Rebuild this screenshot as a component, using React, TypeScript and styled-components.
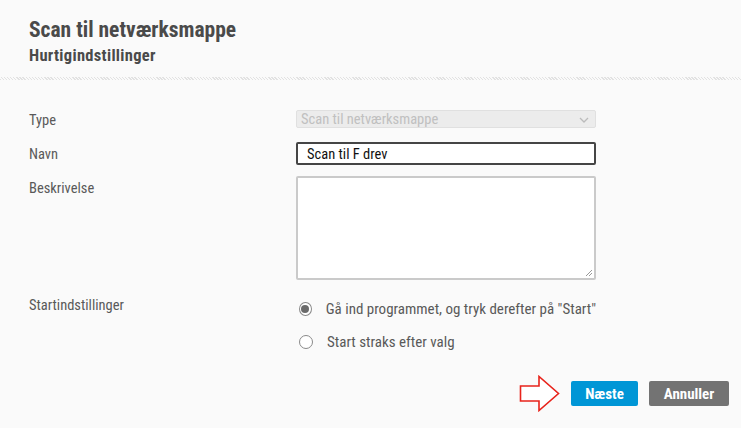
import React from "react";
import styled, { createGlobalStyle } from "styled-components";

const Global = createGlobalStyle`
  html, body { margin: 0; padding: 0; background: #fafafa; }
  body { font-family: "Roboto Condensed", "Roboto", "Liberation Sans", sans-serif; }
`;

const Page = styled.div`
  width: 741px;
  height: 428px;
  background: #fafafa;
  display: flex;
  flex-direction: column;
  overflow: hidden;
`;

const Header = styled.div`
  padding: 17px 29px 0;
  height: 60px;
`;

const Title = styled.h1`
  margin: 0;
  font-size: 21.5px;
  font-weight: bold;
  color: #4a4a4a;
  line-height: 26px;
`;

const Subtitle = styled.h2`
  margin: 4px 0 0;
  font-size: 16.5px;
  letter-spacing: 0.3px;
  font-weight: bold;
  color: #4a4a4a;
  line-height: 18px;
`;

const Divider = styled.div`
  height: 3px;
  background-image: repeating-linear-gradient(45deg, #e2e2e2 0 1px, #fafafa 1px 2.2px);
`;

const Form = styled.div`
  display: flex;
  flex-direction: column;
  padding: 30px 0 0 29px;
`;

const FormRow = styled.div<{ $gap?: number }>`
  display: grid;
  grid-template-columns: 267px 300px;
  align-items: start;
  margin-top: ${(p) => p.$gap ?? 0}px;
`;

const Label = styled.div<{ $top?: number }>`
  font-size: 14.5px;
  color: #595959;
  line-height: 18px;
  padding-top: ${(p) => p.$top ?? 0}px;
  white-space: nowrap;
`;

const SelectBox = styled.div`
  height: 18px;
  box-sizing: border-box;
  border: 1px solid #e0e0e0;
  background: #ececec;
  border-radius: 2px;
  display: flex;
  align-items: center;
  justify-content: space-between;
  padding: 1px 6px 0 4px;
  font-size: 14.5px;
  color: #c0c0c0;
`;

const TextInput = styled.div`
  height: 23px;
  box-sizing: border-box;
  border: 2px solid #454545;
  border-radius: 2px;
  background: #fff;
  display: flex;
  align-items: center;
  padding: 1px 0 0 9px;
  font-size: 14.5px;
  color: #111;
`;

const TextArea = styled.div`
  position: relative;
  height: 104px;
  box-sizing: border-box;
  border: 2px solid #cacaca;
  border-radius: 2px;
  background: #fff;
`;

const Grip = styled.svg`
  position: absolute;
  right: 1px;
  bottom: 1px;
`;

const Radios = styled.div`
  display: flex;
  flex-direction: column;
  gap: 15px;
  padding-top: 5px;
`;

const RadioRow = styled.div`
  display: flex;
  align-items: center;
  gap: 14px;
  padding-left: 3px;
  font-size: 15px;
  color: #595959;
  line-height: 18px;
  white-space: nowrap;
`;

const Circle = styled.span<{ $on?: boolean }>`
  width: 14px;
  height: 14px;
  box-sizing: border-box;
  border-radius: 50%;
  border: 1px solid #8a8a8a;
  background: #fff;
  display: flex;
  align-items: center;
  justify-content: center;
  &::after {
    content: "";
    width: 8px;
    height: 8px;
    border-radius: 50%;
    background: ${(p) => (p.$on ? "#6a6a6a" : "transparent")};
  }
`;

const Footer = styled.div`
  margin-top: auto;
  display: flex;
  justify-content: flex-end;
  align-items: center;
  gap: 11px;
  padding: 0 12px 16px 0;
`;

const Button = styled.div<{ $primary?: boolean }>`
  height: 25px;
  box-sizing: border-box;
  border-radius: 2px;
  background: ${(p) => (p.$primary ? "#0096d6" : "#737373")};
  color: #fff;
  font-weight: bold;
  font-size: 15px;
  display: flex;
  align-items: center;
  justify-content: center;
  width: ${(p) => (p.$primary ? 67 : 80)}px;
`;

const Arrow = styled.svg`
  margin-right: -1px;
`;

export default function App() {
  return (
    <Page>
      <Global />
      <Header>
        <Title>Scan til netværksmappe</Title>
        <Subtitle>Hurtigindstillinger</Subtitle>
      </Header>
      <Divider />
      <Form>
        <FormRow>
          <Label $top={2}>Type</Label>
          <SelectBox>
            <span>Scan til netværksmappe</span>
            <svg width="10" height="6" viewBox="0 0 10 6">
              <path d="M1 1 L5 5 L9 1" fill="none" stroke="#bbb" strokeWidth="1.3" />
            </svg>
          </SelectBox>
        </FormRow>
        <FormRow $gap={12}>
          <Label $top={4}>Navn</Label>
          <TextInput>Scan til F drev</TextInput>
        </FormRow>
        <FormRow $gap={11}>
          <Label $top={4}>Beskrivelse</Label>
          <TextArea>
            <Grip width="9" height="9" viewBox="0 0 9 9">
              <path d="M8 2 L2 8 M8 5 L5 8" stroke="#999" strokeWidth="1" />
            </Grip>
          </TextArea>
        </FormRow>
        <FormRow $gap={15}>
          <Label $top={2}>Startindstillinger</Label>
          <Radios>
            <RadioRow>
              <Circle $on />
              <span>Gå ind programmet, og tryk derefter på "Start"</span>
            </RadioRow>
            <RadioRow>
              <Circle />
              <span>Start straks efter valg</span>
            </RadioRow>
          </Radios>
        </FormRow>
      </Form>
      <Footer>
        <Arrow width="42" height="37" viewBox="0 0 42 37">
          <path d="M1.5 11 L20 11 L20 1.5 L39.5 18.5 L20 35.5 L20 26 L1.5 26 Z" fill="#fff" stroke="#e8231b" strokeWidth="1.6" />
        </Arrow>
        <Button $primary>Næste</Button>
        <Button>Annuller</Button>
      </Footer>
    </Page>
  );
}
